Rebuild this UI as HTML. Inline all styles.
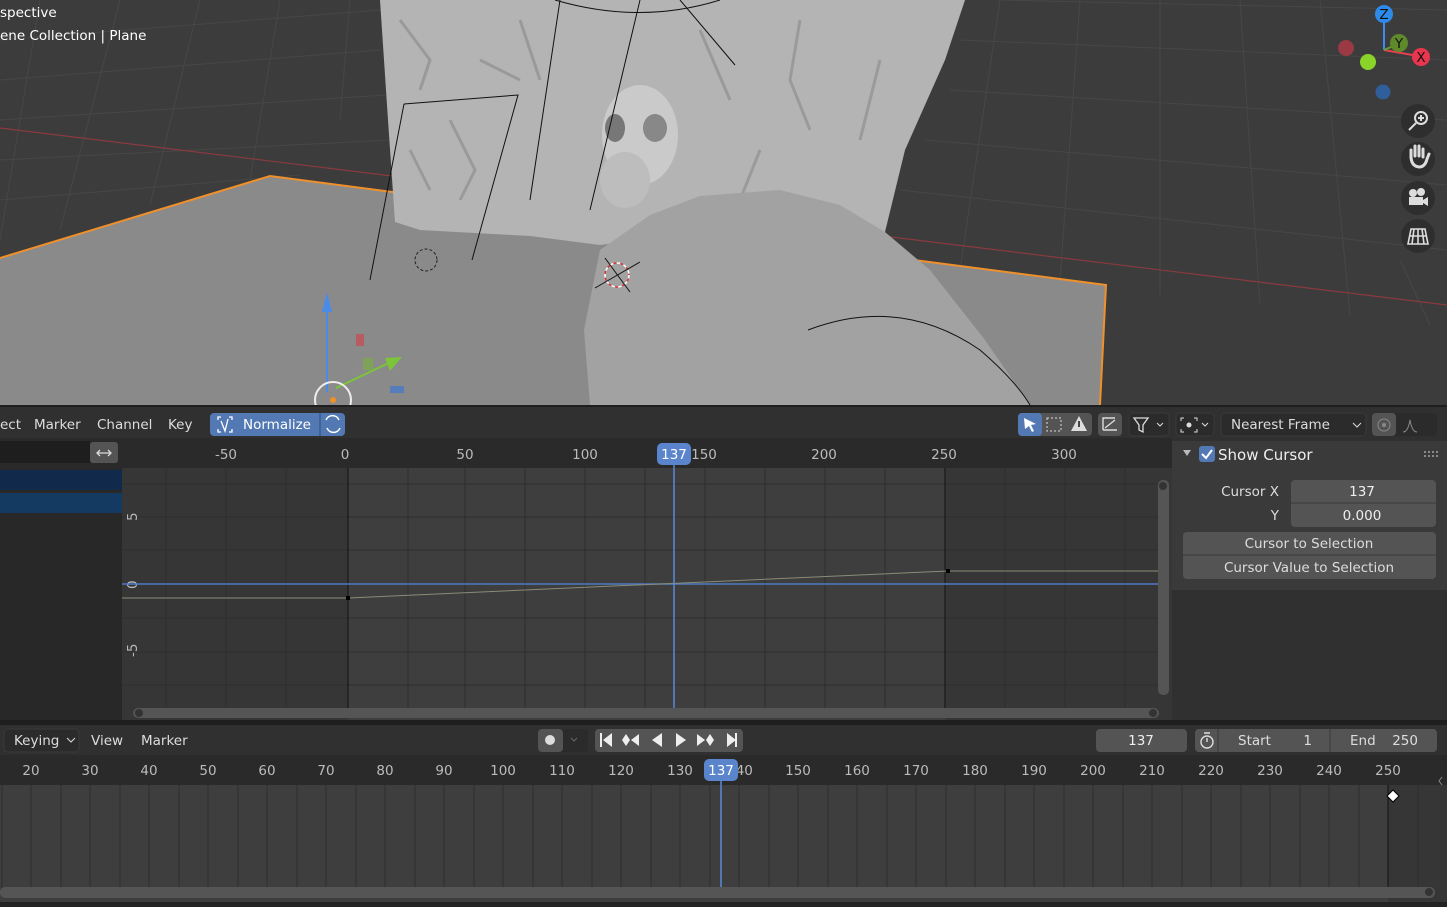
<!DOCTYPE html>
<html><head><meta charset="utf-8"><style>
body{margin:0;width:1447px;height:902px;overflow:hidden;background:#232323;font-family:"Liberation Sans","DejaVu Sans",sans-serif}
svg text{font-family:"DejaVu Sans","Liberation Sans",sans-serif;font-size:13.5px}
</style></head><body>
<svg width="1447" height="902" xmlns="http://www.w3.org/2000/svg">
<!-- viewport -->
<rect x="0" y="0" width="1447" height="405" fill="#3c3c3c"/>
<g stroke="#474747" stroke-width="1">
<line x1="0" y1="40" x2="380" y2="10"/><line x1="0" y1="80" x2="380" y2="50"/><line x1="0" y1="120" x2="385" y2="95"/><line x1="0" y1="160" x2="390" y2="140"/><line x1="0" y1="200" x2="300" y2="175"/>
<line x1="40" y1="0" x2="0" y2="240"/><line x1="120" y1="0" x2="60" y2="230"/><line x1="200" y1="0" x2="150" y2="205"/><line x1="280" y1="0" x2="250" y2="180"/><line x1="350" y1="0" x2="340" y2="120"/>
<line x1="960" y1="40" x2="1447" y2="60"/><line x1="950" y1="90" x2="1447" y2="120"/><line x1="925" y1="140" x2="1447" y2="185"/><line x1="900" y1="190" x2="1447" y2="250"/><line x1="1000" y1="0" x2="1447" y2="10"/>
<line x1="1000" y1="0" x2="960" y2="270"/><line x1="1080" y1="0" x2="1060" y2="280"/><line x1="1160" y1="0" x2="1160" y2="295"/><line x1="1240" y1="0" x2="1260" y2="305"/><line x1="1320" y1="0" x2="1350" y2="315"/><line x1="1400" y1="260" x2="1430" y2="325"/>
</g>
<line x1="0" y1="128" x2="1447" y2="305" stroke="#8a3a40" stroke-width="1.2"/>
<polygon points="0,258 270,176 1106,285 1100,405 0,405" fill="#8a8a8a"/>
<polyline points="0,258 270,176 1106,285 1100,405" fill="none" stroke="#f0902a" stroke-width="2"/>
<polygon points="380,0 965,0 945,60 905,150 885,232 700,240 640,240 600,245 530,236 420,230 395,222 388,120" fill="#b4b4b4"/>
<g stroke="#8e8e8e" stroke-width="3" fill="none" opacity=".7">
<path d="M400 20 l30 40 l-10 30 M450 120 l25 50 l-15 30 M520 20 l20 60 M410 150 l20 40 M700 30 l30 70 M800 20 l-10 60 l20 50 M880 60 l-20 80 M760 150 l-20 50 M480 60 l40 20"/>
</g>
<polygon points="600,250 650,215 700,196 780,190 840,205 885,232 930,270 985,340 1030,405 590,405 584,330" fill="#a2a2a2"/>
<ellipse cx="640" cy="135" rx="38" ry="50" fill="#cacaca"/>
<ellipse cx="625" cy="180" rx="25" ry="28" fill="#bdbdbd"/>
<ellipse cx="615" cy="128" rx="10" ry="14" fill="#777"/><ellipse cx="655" cy="128" rx="12" ry="14" fill="#888"/>
<path d="M808 330 Q900 295 980 350 Q1015 380 1030 405" fill="none" stroke="#111" stroke-width="1"/>
<path d="M404 104 L518 95 L472 260 M404 104 L370 280 M560 0 L530 200 M640 0 L590 210 M680 0 L735 65" fill="none" stroke="#111" stroke-width="1"/>
<path d="M555 0 Q640 25 720 0" fill="none" stroke="#111"/>
<circle cx="426" cy="260" r="11" fill="none" stroke="#222" stroke-dasharray="3 2"/>
<circle cx="617" cy="275" r="12" fill="none" stroke="#fff" stroke-width="1.5" stroke-dasharray="4 3"/>
<circle cx="617" cy="275" r="12" fill="none" stroke="#d33" stroke-width="1.5" stroke-dasharray="3 4" stroke-dashoffset="3.5"/>
<path d="M595 288 L640 262 M605 258 L630 292" stroke="#111"/>
<line x1="327" y1="392" x2="327" y2="300" stroke="#4a8ae8" stroke-width="2"/>
<polygon points="322,312 327,292 332,312" fill="#4a8ae8"/>
<line x1="336" y1="388" x2="395" y2="360" stroke="#7cc43a" stroke-width="2"/>
<polygon points="385,358 402,357 390,371" fill="#7cc43a"/>
<rect x="356" y="334" width="8" height="12" fill="#c05055" opacity=".8"/>
<rect x="363" y="358" width="10" height="12" fill="#7aa84a" opacity=".8"/>
<rect x="390" y="386" width="14" height="7" fill="#4a78c8" opacity=".8"/>
<circle cx="333" cy="400" r="18" fill="none" stroke="#eee" stroke-width="2"/>
<circle cx="333" cy="400" r="3" fill="#f0902a"/>
<text x="0" y="17" fill="#fff" font-size="14">spective</text>
<text x="0" y="40" fill="#fff" font-size="14">ene Collection | Plane</text>
<!-- gizmo -->
<line x1="1384" y1="50" x2="1384" y2="18" stroke="#3a8cf0" stroke-width="2"/>
<line x1="1384" y1="50" x2="1418" y2="56" stroke="#e8404e" stroke-width="2"/>
<line x1="1384" y1="50" x2="1398" y2="44" stroke="#6a9a30" stroke-width="2"/>
<circle cx="1346" cy="48" r="8" fill="#9a3a44"/>
<circle cx="1368" cy="62" r="8" fill="#8ad42a"/>
<circle cx="1383" cy="92" r="7.5" fill="#2f5e9a"/>
<circle cx="1399" cy="43" r="9" fill="#5f8a2a"/><text x="1399" y="48" fill="#111" font-size="12" text-anchor="middle">Y</text>
<circle cx="1384" cy="14" r="9" fill="#2e8ae8"/><text x="1384" y="19" fill="#111" font-size="12" text-anchor="middle">Z</text>
<circle cx="1421" cy="57" r="9" fill="#e8364e"/><text x="1421" y="62" fill="#111" font-size="12" text-anchor="middle">X</text>
<g fill="#2e2e2e"><circle cx="1418" cy="121" r="17"/><circle cx="1418" cy="159" r="17"/><circle cx="1418" cy="198" r="17"/><circle cx="1418" cy="236" r="17"/></g>
<g fill="none" stroke="#ddd" stroke-width="2"><circle cx="1421" cy="118" r="6"/><line x1="1416" y1="123" x2="1409" y2="130"/><line x1="1421" y1="115" x2="1421" y2="121"/><line x1="1418" y1="118" x2="1424" y2="118"/></g>
<path d="M1411 158 v-8 M1415 156 v-10 M1419 156 v-10 M1423 157 v-8 M1411 156 q0 10 8 11 q6 0 8 -8 l2 -5" stroke="#ddd" stroke-width="3" fill="none" stroke-linecap="round"/>
<g fill="#ddd"><circle cx="1413" cy="193" r="4"/><circle cx="1421" cy="192" r="4"/><rect x="1409" y="197" width="14" height="8"/><polygon points="1423,200 1428,197 1428,206 1423,203"/></g>
<path d="M1411 229h14l3 15h-20z M1409 236h18 M1414 229l-2 15 M1418 229v15 M1422 229l2 15" stroke="#ddd" stroke-width="1.6" fill="none"/>
<!-- graph header -->
<rect x="0" y="405" width="1447" height="33" fill="#303030"/>
<rect x="0" y="405" width="1447" height="2" fill="#1e1e1e"/>
<g fill="#ddd"><text x="0" y="429">ect</text><text x="34" y="429">Marker</text><text x="97" y="429">Channel</text><text x="168" y="429">Key</text></g>
<rect x="210" y="413" width="135" height="23" rx="4" fill="#5379b5"/>
<line x1="320" y1="413" x2="320" y2="436" stroke="#2f4a75"/>
<text x="243" y="429" fill="#fff">Normalize</text>
<path d="M218 420v-3h3 M229 417h3v3 M218 429v3h3 M232 429v3h-3 M221 421l4 10 l3 -12" stroke="#fff" fill="none" stroke-width="1.3"/>
<path d="M326 420 a7 7 0 0 1 13 0 M340 428 a7 7 0 0 1 -13 0" stroke="#fff" fill="none" stroke-width="1.5"/>
<rect x="1018" y="413" width="74" height="23" rx="4" fill="#545454"/>
<rect x="1018" y="413" width="24" height="23" rx="4" fill="#5379b5"/>
<path d="M1024 418 l12 6 -5 1 3 6 -2 1 -3 -6 -4 3z" fill="#fff"/>
<rect x="1047" y="418" width="14" height="13" fill="none" stroke="#ddd" stroke-dasharray="2 2"/>
<path d="M1079 416 l8 15 h-16z" fill="#ddd"/><rect x="1078" y="421" width="2" height="6" fill="#444"/>
<rect x="1098" y="413" width="24" height="23" rx="4" fill="#545454"/>
<path d="M1103 430 h14 M1103 430 v-12 h12 M1105 428 l10 -8" stroke="#ddd" fill="none" stroke-width="1.4"/>
<rect x="1129" y="413" width="40" height="23" rx="4" fill="#2b2b2b" stroke="#3a3a3a"/>
<path d="M1134 418h14l-5 7v7l-4-2v-5z" fill="none" stroke="#ddd" stroke-width="1.3"/>
<path d="M1157 423l3 3 3-3" stroke="#ddd" fill="none"/>
<rect x="1176" y="413" width="38" height="23" rx="4" fill="#2b2b2b" stroke="#3a3a3a"/>
<circle cx="1189" cy="425" r="2.5" fill="#ddd"/>
<path d="M1181 421v-3h3 M1194 418h3v3 M1181 429v3h3 M1197 429v3h-3" stroke="#ddd" fill="none"/>
<path d="M1202 423l3 3 3-3" stroke="#ddd" fill="none"/>
<rect x="1221" y="413" width="145" height="23" rx="4" fill="#2b2b2b" stroke="#3a3a3a"/>
<text x="1231" y="429" fill="#ddd">Nearest Frame</text>
<path d="M1353 423l4 4 4-4" stroke="#ddd" fill="none"/>
<rect x="1372" y="413" width="65" height="23" rx="4" fill="#2b2b2b"/>
<rect x="1372" y="413" width="24" height="23" rx="4" fill="#545454"/>
<circle cx="1384" cy="425" r="6" fill="none" stroke="#888"/><circle cx="1384" cy="425" r="2" fill="#888"/>
<path d="M1403 432 q5 0 7 -12 q2 12 7 12" stroke="#888" fill="none"/>
<!-- ruler -->
<rect x="0" y="438" width="1172" height="30" fill="#2a2a2a"/>
<rect x="0" y="441" width="90" height="22" fill="#1e1e1e"/>
<rect x="90" y="442" width="28" height="21" rx="3" fill="#545454"/>
<path d="M97 453h14 M100 450l-3 3 3 3 M108 450l3 3-3 3" stroke="#ddd" fill="none" stroke-width="1.3"/>
<g fill="#bbb" text-anchor="middle"><text x="226" y="459">-50</text><text x="345" y="459">0</text><text x="465" y="459">50</text><text x="585" y="459">100</text><text x="704" y="459">150</text><text x="824" y="459">200</text><text x="944" y="459">250</text><text x="1064" y="459">300</text></g>
<!-- channels -->
<rect x="0" y="468" width="122" height="252" fill="#282828"/>
<rect x="0" y="470" width="122" height="20" fill="#11294a"/>
<rect x="0" y="493" width="122" height="20" fill="#153a62"/>
<!-- graph area -->
<rect x="122" y="468" width="1050" height="252" fill="#363636"/>
<rect x="348" y="468" width="597" height="252" fill="#3e3e3e"/>
<g stroke="#2d2d2d" stroke-width="1">
<line x1="226" y1="468" x2="226" y2="708"/><line x1="286" y1="468" x2="286" y2="708"/><line x1="166" y1="468" x2="166" y2="708"/>
<line x1="408" y1="468" x2="408" y2="708"/><line x1="465" y1="468" x2="465" y2="708"/><line x1="525" y1="468" x2="525" y2="708"/><line x1="585" y1="468" x2="585" y2="708"/><line x1="645" y1="468" x2="645" y2="708"/><line x1="705" y1="468" x2="705" y2="708"/><line x1="765" y1="468" x2="765" y2="708"/><line x1="825" y1="468" x2="825" y2="708"/><line x1="885" y1="468" x2="885" y2="708"/><line x1="1005" y1="468" x2="1005" y2="708"/><line x1="1065" y1="468" x2="1065" y2="708"/><line x1="1125" y1="468" x2="1125" y2="708"/>
<line x1="122" y1="517" x2="1158" y2="517"/><line x1="122" y1="550" x2="1158" y2="550"/><line x1="122" y1="618" x2="1158" y2="618"/><line x1="122" y1="652" x2="1158" y2="652"/><line x1="122" y1="685" x2="1158" y2="685"/><line x1="122" y1="484" x2="1158" y2="484"/>
</g>
<line x1="348" y1="468" x2="348" y2="708" stroke="#111"/>
<line x1="945" y1="468" x2="945" y2="708" stroke="#111"/>
<g fill="#bbb" style="font-size:12px"><text transform="translate(137,521) rotate(-90)">5</text><text transform="translate(137,589) rotate(-90)">0</text><text transform="translate(137,657) rotate(-90)">-5</text></g>
<line x1="122" y1="584" x2="1158" y2="584" stroke="#4f7ac0" stroke-width="1.5"/>
<polyline points="122,598 348,598 948,571 1158,571" fill="none" stroke="#8a8c78" stroke-width="1"/>
<rect x="346" y="596" width="4" height="4" fill="#000"/><rect x="946" y="569" width="4" height="4" fill="#000"/>
<line x1="674" y1="462" x2="674" y2="708" stroke="#5a8ad8" stroke-width="1.5"/>
<rect x="657" y="443" width="34" height="22" rx="5" fill="#5a85cc"/>
<text x="674" y="459" fill="#fff" text-anchor="middle">137</text>
<rect x="1158" y="480" width="11" height="215" rx="5" fill="#555"/><circle cx="1163" cy="486" r="4" fill="#333"/>
<rect x="133" y="708" width="1026" height="10" rx="5" fill="#555"/><circle cx="139" cy="713" r="4" fill="#333"/><circle cx="1153" cy="713" r="4" fill="#333"/>
<!-- sidebar -->
<rect x="1172" y="438" width="275" height="282" fill="#303030"/>
<rect x="1172" y="441" width="275" height="27" fill="#3a3a3a"/>
<rect x="1172" y="468" width="275" height="122" fill="#3a3a3a"/>
<path d="M1183 450h8l-4 6z" fill="#bbb"/>
<rect x="1199" y="446" width="16" height="16" rx="3" fill="#5379b5"/>
<path d="M1202 454l4 4 6-8" stroke="#fff" stroke-width="2" fill="none"/>
<text x="1218" y="460" fill="#eee" style="font-size:15px">Show Cursor</text>
<g fill="#888"><rect x="1424" y="451" width="2" height="2"/><rect x="1428" y="451" width="2" height="2"/><rect x="1432" y="451" width="2" height="2"/><rect x="1436" y="451" width="2" height="2"/><rect x="1424" y="455" width="2" height="2"/><rect x="1428" y="455" width="2" height="2"/><rect x="1432" y="455" width="2" height="2"/><rect x="1436" y="455" width="2" height="2"/></g>
<text x="1279" y="496" fill="#ddd" text-anchor="end">Cursor X</text>
<text x="1279" y="520" fill="#ddd" text-anchor="end">Y</text>
<rect x="1291" y="480" width="145" height="47" rx="4" fill="#545454"/>
<line x1="1291" y1="503" x2="1436" y2="503" stroke="#3a3a3a"/>
<text x="1362" y="496" fill="#eee" text-anchor="middle">137</text>
<text x="1362" y="520" fill="#eee" text-anchor="middle">0.000</text>
<rect x="1183" y="532" width="253" height="47" rx="4" fill="#545454"/>
<line x1="1183" y1="555" x2="1436" y2="555" stroke="#3a3a3a"/>
<text x="1309" y="548" fill="#ddd" text-anchor="middle">Cursor to Selection</text>
<text x="1309" y="572" fill="#ddd" text-anchor="middle">Cursor Value to Selection</text>
<!-- timeline -->
<rect x="0" y="720" width="1447" height="5" fill="#1e1e1e"/>
<rect x="0" y="725" width="1447" height="30" fill="#303030"/>
<rect x="4" y="729" width="75" height="23" rx="4" fill="#2b2b2b" stroke="#3a3a3a"/>
<text x="14" y="745" fill="#ddd">Keying</text><path d="M67 738l4 4 4-4" stroke="#ddd" fill="none"/>
<text x="91" y="745" fill="#ddd">View</text><text x="141" y="745" fill="#ddd">Marker</text>
<rect x="538" y="729" width="50" height="23" rx="4" fill="#2b2b2b"/><rect x="538" y="729" width="25" height="23" rx="4" fill="#545454"/>
<circle cx="550" cy="740" r="5" fill="#ddd"/><path d="M571 738l3 3 3-3" stroke="#666" fill="none"/>
<rect x="595" y="729" width="148" height="23" rx="4" fill="#545454"/>
<g fill="#eee"><rect x="600" y="733" width="2" height="14"/><path d="M612 733v14l-9-7z"/><path d="M622 740l4-6 4 6-4 6z M631 740l8-6v12z"/><path d="M662 733v14l-10-7z"/><path d="M676 733v14l10-7z"/><path d="M697 734v12l8-6z M706 740l4-6 4 6-4 6z"/><path d="M727 733v14l9-7z"/><rect x="735" y="733" width="2" height="14"/></g>
<rect x="1096" y="729" width="91" height="23" rx="4" fill="#545454"/><text x="1141" y="745" fill="#eee" text-anchor="middle">137</text>
<rect x="1195" y="729" width="242" height="23" rx="4" fill="#545454"/>
<line x1="1218" y1="729" x2="1218" y2="752" stroke="#3a3a3a"/><line x1="1330" y1="729" x2="1330" y2="752" stroke="#3a3a3a"/>
<circle cx="1207" cy="742" r="6" fill="none" stroke="#ddd" stroke-width="1.4"/><path d="M1207 742v-4 M1204 733h6" stroke="#ddd" stroke-width="1.4"/>
<text x="1238" y="745" fill="#ddd">Start</text><text x="1312" y="745" fill="#ddd" text-anchor="end">1</text>
<text x="1350" y="745" fill="#ddd">End</text><text x="1418" y="745" fill="#ddd" text-anchor="end">250</text>
<rect x="0" y="755" width="1447" height="30" fill="#2a2a2a"/>
<rect x="0" y="785" width="1447" height="117" fill="#3e3e3e"/>
<rect x="1388" y="785" width="59" height="117" fill="#363636"/>
<g stroke="#2e2e2e">
<line x1="2" y1="785" x2="2" y2="890"/><line x1="31" y1="785" x2="31" y2="890"/><line x1="61" y1="785" x2="61" y2="890"/><line x1="90" y1="785" x2="90" y2="890"/><line x1="120" y1="785" x2="120" y2="890"/><line x1="149" y1="785" x2="149" y2="890"/><line x1="179" y1="785" x2="179" y2="890"/><line x1="208" y1="785" x2="208" y2="890"/><line x1="238" y1="785" x2="238" y2="890"/><line x1="267" y1="785" x2="267" y2="890"/><line x1="297" y1="785" x2="297" y2="890"/><line x1="326" y1="785" x2="326" y2="890"/><line x1="356" y1="785" x2="356" y2="890"/><line x1="385" y1="785" x2="385" y2="890"/><line x1="415" y1="785" x2="415" y2="890"/><line x1="444" y1="785" x2="444" y2="890"/><line x1="474" y1="785" x2="474" y2="890"/><line x1="503" y1="785" x2="503" y2="890"/><line x1="533" y1="785" x2="533" y2="890"/><line x1="562" y1="785" x2="562" y2="890"/><line x1="592" y1="785" x2="592" y2="890"/><line x1="621" y1="785" x2="621" y2="890"/><line x1="651" y1="785" x2="651" y2="890"/><line x1="680" y1="785" x2="680" y2="890"/><line x1="710" y1="785" x2="710" y2="890"/><line x1="739" y1="785" x2="739" y2="890"/><line x1="769" y1="785" x2="769" y2="890"/><line x1="798" y1="785" x2="798" y2="890"/><line x1="828" y1="785" x2="828" y2="890"/><line x1="857" y1="785" x2="857" y2="890"/><line x1="887" y1="785" x2="887" y2="890"/><line x1="916" y1="785" x2="916" y2="890"/><line x1="946" y1="785" x2="946" y2="890"/><line x1="975" y1="785" x2="975" y2="890"/><line x1="1005" y1="785" x2="1005" y2="890"/><line x1="1034" y1="785" x2="1034" y2="890"/><line x1="1064" y1="785" x2="1064" y2="890"/><line x1="1093" y1="785" x2="1093" y2="890"/><line x1="1123" y1="785" x2="1123" y2="890"/><line x1="1152" y1="785" x2="1152" y2="890"/><line x1="1182" y1="785" x2="1182" y2="890"/><line x1="1211" y1="785" x2="1211" y2="890"/><line x1="1241" y1="785" x2="1241" y2="890"/><line x1="1270" y1="785" x2="1270" y2="890"/><line x1="1300" y1="785" x2="1300" y2="890"/><line x1="1329" y1="785" x2="1329" y2="890"/><line x1="1359" y1="785" x2="1359" y2="890"/><line x1="1418" y1="785" x2="1418" y2="890"/>
</g>
<line x1="1388" y1="785" x2="1388" y2="890" stroke="#111"/>
<g fill="#bbb" text-anchor="middle"><text x="31" y="775">20</text><text x="90" y="775">30</text><text x="149" y="775">40</text><text x="208" y="775">50</text><text x="267" y="775">60</text><text x="326" y="775">70</text><text x="385" y="775">80</text><text x="444" y="775">90</text><text x="503" y="775">100</text><text x="562" y="775">110</text><text x="621" y="775">120</text><text x="680" y="775">130</text><text x="740" y="775">140</text><text x="798" y="775">150</text><text x="857" y="775">160</text><text x="916" y="775">170</text><text x="975" y="775">180</text><text x="1034" y="775">190</text><text x="1093" y="775">200</text><text x="1152" y="775">210</text><text x="1211" y="775">220</text><text x="1270" y="775">230</text><text x="1329" y="775">240</text><text x="1388" y="775">250</text></g>
<line x1="721" y1="778" x2="721" y2="890" stroke="#5a8ad8" stroke-width="1.5"/>
<rect x="704" y="759" width="34" height="22" rx="5" fill="#5a85cc"/>
<text x="721" y="775" fill="#fff" text-anchor="middle">137</text>
<path d="M1393 790l6 6-6 6-6-6z" fill="#fff" stroke="#000"/>
<rect x="0" y="887" width="1435" height="11" rx="5" fill="#555"/><circle cx="1429" cy="892" r="4" fill="#333"/>
<path d="M1442 777l-3 4 3 4" stroke="#888" fill="none"/>
</svg>
</body></html>
